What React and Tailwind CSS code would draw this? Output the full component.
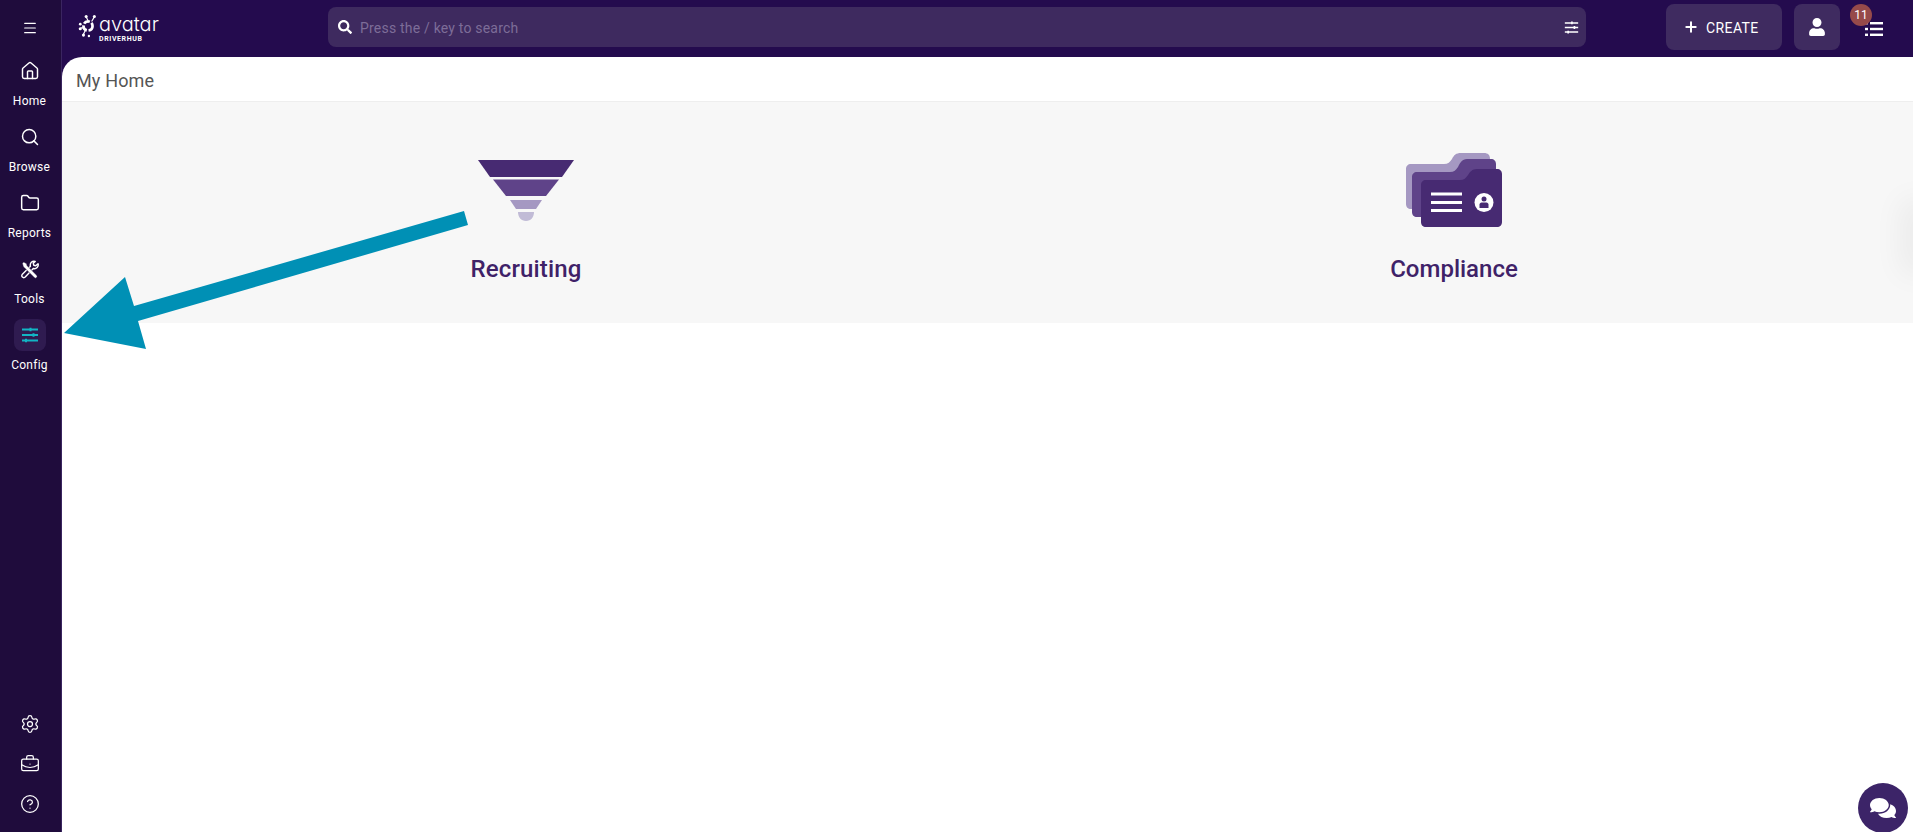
import React from 'react';
import { Menu, Home, Search, Folder, Settings, BriefcaseBusiness, CircleHelp, Plus } from 'lucide-react';
import { FaSearch, FaUser, FaComments } from 'react-icons/fa';

const navItems = [
  { label: 'Home', icon: <Home size={20} strokeWidth={1.75} /> },
  { label: 'Browse', icon: <Search size={20} strokeWidth={1.75} /> },
  { label: 'Reports', icon: <Folder size={20} strokeWidth={1.75} /> },
  { label: 'Tools', icon: <ToolsIcon /> },
  { label: 'Config', icon: <SlidersIcon className="h-[18px] w-[18px] text-[#12b5c4]" />, active: true },
];

function ToolsIcon() {
  return (
    <svg viewBox="0 0 20 20" className="h-[19px] w-[19px]">
      <path d="M16 1.500a4 4 0 0 0-5 5L2.500 15a2 2 0 0 0 3 3L14 9a4 4 0 0 0 5-5l-2.500 2-2-.5-.5-2z" fill="#1f0c3c" stroke="#fff" strokeWidth="1.500" strokeLinejoin="round" />
      <path d="M2.500 3.500 4 2l3 2 .5 2 10 10a1.600 1.600 0 0 1-2.500 2.500L5 8.500 3.500 7z" fill="#fff" stroke="#1f0c3c" strokeWidth="0.500" />
    </svg>
  );
}

function SlidersIcon({ className }) {
  return (
    <svg viewBox="0 0 18 18" className={className} fill="none" stroke="currentColor" strokeWidth="1.800">
      <path d="M1 3.500h16M1 9h16M1 14.500h16" />
      <path d="M9.500 1.800v3.400M12.500 7.300v3.400M5 12.800v3.400" strokeWidth="2" />
    </svg>
  );
}

function ListIcon() {
  return (
    <svg viewBox="0 0 18 14" className="h-[14px] w-[18px] text-white" fill="currentColor">
      <rect x="0" y="0" width="3" height="2.400" />
      <rect x="0" y="5.800" width="3" height="2.400" />
      <rect x="0" y="11.600" width="3" height="2.400" />
      <rect x="5" y="0" width="13" height="2.400" />
      <rect x="5" y="5.800" width="13" height="2.400" />
      <rect x="5" y="11.600" width="13" height="2.400" />
    </svg>
  );
}

function Logo() {
  return (
    <div className="flex items-start">
      <svg viewBox="0 0 22 26" className="mt-[13px] h-[26px] w-[20px] text-white" fill="none" stroke="currentColor">
        <circle cx="11" cy="13" r="5" strokeWidth="3" strokeDasharray="7 2" />
        <path d="M11 7 9 3M15 8l3-5M6 15l-3 0M8 18l-2 4" strokeWidth="1.300" />
        <circle cx="9" cy="2.500" r="1.700" fill="currentColor" stroke="none" />
        <circle cx="18" cy="2.500" r="1.700" fill="currentColor" stroke="none" />
        <circle cx="2.500" cy="11" r="1.500" fill="currentColor" stroke="none" />
        <circle cx="2.500" cy="16" r="1.700" fill="currentColor" stroke="none" />
        <circle cx="6" cy="23" r="1.700" fill="currentColor" stroke="none" />
        <circle cx="12" cy="24" r="1.300" fill="currentColor" stroke="none" />
      </svg>
      <div className="ml-[1px] mt-[12px] flex flex-col text-white">
        <span className="font-['Inter'] text-[20px] font-light leading-[24px] [font-feature-settings:'cv11']">avatar</span>
        <span className="mt-[-1px] font-['Roboto'] text-[7px] font-bold leading-[8px] tracking-[0.6px]">DRIVERHUB</span>
      </div>
    </div>
  );
}

function FunnelIcon() {
  return (
    <svg viewBox="0 0 96 61" className="h-[61px] w-[96px]">
      <path d="M0 0h96L84 17H12z" fill="#472a72" />
      <path d="M15 19.500h66L68 36H28z" fill="#5f4389" />
      <path d="M32 40h32l-6 9H38z" fill="#a598c2" />
      <path d="M40 52h16c0 5-3 9-8 9s-8-4-8-9z" fill="#c1bbd6" />
    </svg>
  );
}

function FolderIcon() {
  return (
    <svg viewBox="0 0 96 74" className="h-[74px] w-[96px]">
      <path d="M5 11h33c4 0 6-2 8-5 2-4 4-6 9-6h23c4 0 6 2 6 6v45c0 3-2 5-5 5H5c-3 0-5-2-5-5V16c0-3 2-5 5-5z" fill="#a598c2" />
      <path d="M11 19h33c4 0 6-2 8-5 2-4 4-8 9-8h24c3 0 5 2 5 5v48c0 3-2 5-5 5H11c-3 0-5-2-5-5V24c0-3 2-5 5-5z" fill="#5f4389" />
      <path d="M20 27h34c4 0 6-2 8-5s4-6 9-6h20c3 0 5 2 5 5v48c0 3-2 5-5 5H20c-3 0-5-2-5-5V32c0-3 2-5 5-5z" fill="#472a72" />
      <path d="M25 41h31M25 49.500h31M25 57.500h31" stroke="#fff" strokeWidth="3" />
      <circle cx="78" cy="49.500" r="9.500" fill="#fff" />
      <circle cx="78" cy="46" r="2.500" fill="#472a72" />
      <path d="M73.500 55v-3.500c0-1 1-2 2-2h5c1 0 2 1 2 2V55z" fill="#472a72" />
    </svg>
  );
}

export default function App() {
  return (
    <div className="relative flex h-[832px] w-[1913px] overflow-hidden bg-[#240b4e] font-['Roboto',sans-serif]">
      {/* Side nav */}
      <aside className="flex w-[62px] shrink-0 flex-col items-center border-r border-[#3a2560] bg-[#1f0c3c] pr-[2px] text-white">
        <div className="flex h-[55px] w-full items-center justify-center">
          <Menu size={16} strokeWidth={1.75} />
        </div>
        <nav className="flex w-full flex-col items-center">
          {navItems.map((item) => (
            <div key={item.label} className="flex h-[66px] w-full flex-col items-center">
              <div className={`flex h-[32px] w-[32px] items-center justify-center rounded-lg ${item.active ? 'bg-[#2f1b50]' : ''}`}>
                {item.icon}
              </div>
              <span className="mt-[4px] text-[12px] font-[450] leading-[20px] tracking-[0.25px]">{item.label}</span>
            </div>
          ))}
        </nav>
        <div className="mt-auto flex flex-col items-center gap-[20px] pb-[18px]">
          <Settings size={20} strokeWidth={1.5} />
          <BriefcaseBusiness size={20} strokeWidth={1.5} />
          <CircleHelp size={20} strokeWidth={1.5} />
        </div>
      </aside>

      <div className="flex min-w-0 flex-1 flex-col">
        {/* Top bar */}
        <header className="flex h-[57px] shrink-0 items-start">
          <div className="ml-[16px] w-[250px]">
            <Logo />
          </div>
          <div className="mt-[7px] flex h-[40px] w-[1258px] items-center rounded-lg bg-[#3e2a5f] pl-[10px] pr-[7px]">
            <FaSearch size={14} className="text-white" />
            <span className="ml-[8px] mt-[2px] text-[14px] tracking-[0.2px] text-[#7d6d98]">Press the / key to search</span>
            <SlidersIcon className="ml-auto h-[15px] w-[15px] text-white" />
          </div>
          <button className="ml-[80px] mt-[4px] flex h-[46px] w-[116px] items-center gap-[7px] rounded-lg bg-[#3f2b60] pl-[17px] text-[14px] tracking-[0.4px] text-white">
            <Plus size={16} strokeWidth={3} />
            <span className="mt-[2px]">CREATE</span>
          </button>
          <button className="ml-[12px] mt-[4px] flex h-[46px] w-[46px] items-center justify-center rounded-lg bg-[#3f2b60] text-white">
            <FaUser size={18} />
          </button>
          <div className="relative ml-[25px] mt-[22px]">
            <ListIcon />
            <span className="absolute left-[-15px] top-[-18px] flex h-[22px] w-[22px] items-center justify-center rounded-full bg-[#964a4a] text-[12px] text-white">11</span>
          </div>
        </header>

        {/* Page */}
        <main className="flex-1 overflow-hidden rounded-tl-[20px] bg-white">
          <div className="flex h-[45px] items-center border-b border-[#eeeeee] pl-[14px] pt-[2px] text-[18px] tracking-[0.15px] text-[#555555]">My Home</div>
          <div className="relative grid h-[221px] grid-cols-[928px_928px] overflow-hidden bg-[#f7f7f7]">
            <div className="flex flex-col items-center pt-[48px]">
              <div className="flex h-[80px] items-center"><FunnelIcon /></div>
              <span className="mt-[23px] text-[24px] font-medium leading-[32px] tracking-[0.15px] text-[#3f2268]">Recruiting</span>
            </div>
            <div className="flex flex-col items-center pt-[48px]">
              <div className="flex h-[80px] items-center"><FolderIcon /></div>
              <span className="mt-[23px] text-[24px] font-medium leading-[32px] text-[#3f2268]">Compliance</span>
            </div>
            <div className="absolute right-[-12px] top-[110px] h-[50px] w-[12px] shadow-[0_0_30px_12px_rgba(0,0,0,0.05)]" />
          </div>
        </main>
      </div>

      {/* Annotation arrow */}
      <svg className="pointer-events-none absolute left-0 top-0 h-[832px] w-[1913px]" viewBox="0 0 1913 832">
        <path d="M64 333 125 277 134 306 464 211 468 225 138 321 146 349z" fill="#0090b5" />
      </svg>

      {/* Chat bubble */}
      <button className="absolute bottom-[-1px] right-[5px] flex h-[50px] w-[50px] items-center justify-center rounded-full bg-[#3c2468] text-white">
        <FaComments size={26} />
      </button>
    </div>
  );
}
